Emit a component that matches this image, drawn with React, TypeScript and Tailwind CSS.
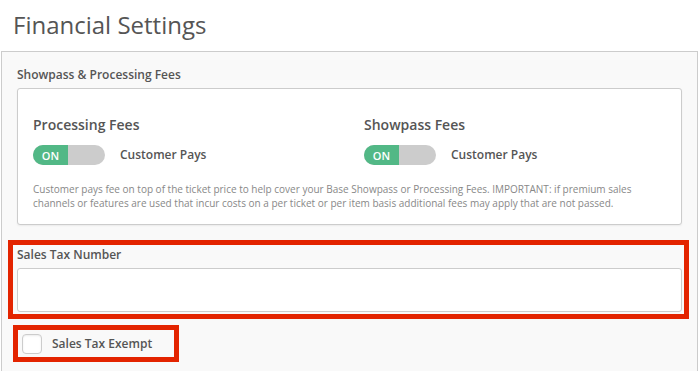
import React from "react";

const font = { fontFamily: '"Open Sans", "Noto Sans", sans-serif' };

function Toggle() {
  return (
    <div className="flex h-[20px] w-[72px] overflow-hidden rounded-full bg-[#cccccc]">
      <div className="flex w-[35px] items-center justify-center bg-[#52b886] text-[11px] font-semibold leading-none text-white">
        ON
      </div>
    </div>
  );
}

function FeeColumn({ title, className }: { title: string; className?: string }) {
  return (
    <div className={className}>
      <h3 className="text-[14px] font-semibold leading-[20px] text-[#555]">{title}</h3>
      <div className="mt-[10px] flex items-center gap-[15px]">
        <Toggle />
        <span className="text-[12px] font-semibold text-[#555]">Customer Pays</span>
      </div>
    </div>
  );
}

export default function App() {
  return (
    <div className="h-[371px] w-[700px] overflow-hidden bg-white" style={font}>
      <h1 className="flex h-[51px] items-center pb-[2px] pl-[13px] text-[24px] font-normal text-[#555]">
        Financial Settings
      </h1>

      <div className="ml-[1px] h-[330px] w-[697px] border border-[#cccccc] bg-[#f9f9f9]">
        <p className="mx-[15px] mt-[15px] text-[12px] font-semibold leading-[16px] text-[#555]">
          Showpass &amp; Processing Fees
        </p>

        <div className="mx-[15px] mt-[5px] h-[137px] rounded-[3px] border border-[#cccccc] bg-white px-[15px] pt-[26px] shadow-[0_1px_2px_rgba(0,0,0,0.06)]">
          <div className="flex">
            <FeeColumn title="Processing Fees" className="w-[331px]" />
            <FeeColumn title="Showpass Fees" />
          </div>
          <p className="mt-[17px] text-[10px] leading-[14px] text-[#888]">
            Customer pays fee on top of the ticket price to help cover your Base Showpass or Processing Fees. IMPORTANT: if premium sales channels or features are used that incur costs on a per ticket or per item basis additional fees may apply that are not passed.
          </p>
        </div>

        <div className="ml-[6px] mt-[15px] w-[681px] border-[5px] border-[#e32400] pb-[2px] pl-[4px] pr-[2px] pt-[2px]">
          <label className="block text-[12px] font-semibold leading-[16px] text-[#555]">Sales Tax Number</label>
          <input
            type="text"
            className="mt-[5px] block h-[44px] w-full rounded-[3px] border border-[#cccccc] bg-white px-2 outline-none"
          />
        </div>

        <div className="ml-[11px] mt-[6px] flex h-[37px] w-[166px] items-center gap-[10px] border-[5px] border-[#e32400] pl-[4px]">
          <span className="h-[20px] w-[20px] rounded-[4px] border border-[#cccccc] bg-white shadow-[inset_0_1px_2px_rgba(0,0,0,0.08)]" />
          <span className="text-[12px] font-semibold text-[#555]">Sales Tax Exempt</span>
        </div>
      </div>
    </div>
  );
}
